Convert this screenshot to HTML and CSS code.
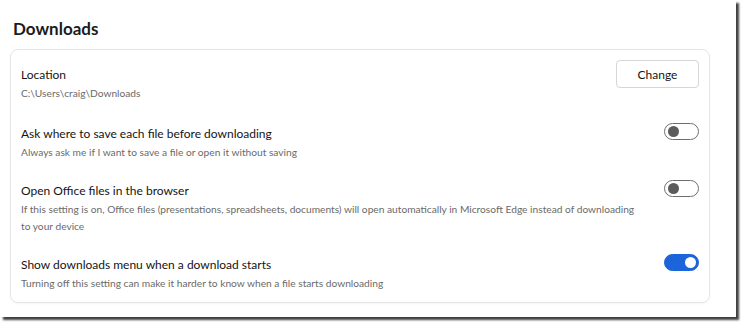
FILE: index.html
```html
<!DOCTYPE html>
<html lang="en">
<head>
    <meta charset="UTF-8">
    <title>Downloads</title>
    <link rel="stylesheet" href="styles.css">
</head>
<body>
    <div class="frame">
        <h2 class="section-title">Downloads</h2>

        <div class="settings-card">
            <div class="setting-row location-row">
                <div class="setting-text">
                    <div class="setting-label">Location</div>
                    <div class="setting-desc">C:\Users\craig\Downloads</div>
                </div>
                <button class="change-btn">Change</button>
            </div>

            <div class="setting-row">
                <div class="setting-text">
                    <div class="setting-label">Ask where to save each file before downloading</div>
                    <div class="setting-desc">Always ask me if I want to save a file or open it without saving</div>
                </div>
                <div class="toggle"><span class="knob"></span></div>
            </div>

            <div class="setting-row">
                <div class="setting-text">
                    <div class="setting-label">Open Office files in the browser</div>
                    <div class="setting-desc">If this setting is on, Office files (presentations, spreadsheets, documents) will open automatically in Microsoft Edge instead of downloading to your device</div>
                </div>
                <div class="toggle"><span class="knob"></span></div>
            </div>

            <div class="setting-row">
                <div class="setting-text">
                    <div class="setting-label">Show downloads menu when a download starts</div>
                    <div class="setting-desc">Turning off this setting can make it harder to know when a file starts downloading</div>
                </div>
                <div class="toggle on"><span class="knob"></span></div>
            </div>
        </div>
    </div>
</body>
</html>
```

FILE: styles.css
```css
* {
    margin: 0;
    padding: 0;
    box-sizing: border-box;
    font-family: Lato, 'Noto Sans', sans-serif;
}

body {
    background-color: #ffffff;
    width: 741px;
    height: 323px;
    overflow: hidden;
}

/* the screenshot sits in a frame with a dark drop shadow */
.frame {
    width: 736px;
    height: 317px;
    background: white;
    padding: 0 0 0 10px;
    box-shadow: 3px 3px 2px rgba(0, 0, 0, 0.75);
}

.section-title {
    font-size: 17px;
    font-weight: 700;
    color: #1c1c1c;
    padding: 18px 0 0 3px;
    height: 49px;
    line-height: 22px;
}

.settings-card {
    width: 700px;
    border: 1px solid #e5e5e5;
    border-radius: 8px;
    box-shadow: 0 1px 2px rgba(0, 0, 0, 0.04);
    padding-top: 5px;
}

.setting-row {
    display: flex;
    justify-content: space-between;
    align-items: flex-start;
    padding: 10px 10px 10px 10px;
}

.setting-text {
    max-width: 620px;
}

.setting-label {
    font-size: 12px;
    line-height: 20px;
    color: #141414;
}

.setting-desc {
    font-size: 10.2px;
    line-height: 17px;
    color: #6a6a6a;
}

.location-row {
    padding-bottom: 12px;
}

.change-btn {
    width: 83px;
    height: 28px;
    margin-top: -5px;
    background: white;
    border: 1px solid #d6d6d6;
    border-radius: 4px;
    font-size: 12px;
    color: #141414;
}

.toggle {
    width: 35px;
    height: 17px;
    margin-top: -1px;
    border: 1px solid #6e6e6e;
    border-radius: 9px;
    display: flex;
    align-items: center;
    padding: 0 3px;
    flex-shrink: 0;
}

.toggle .knob {
    width: 11px;
    height: 11px;
    border-radius: 50%;
    background-color: #5c5c5c;
}

.toggle.on {
    background-color: #1b64da;
    border-color: #1b64da;
    justify-content: flex-end;
    padding: 0 2px;
}

.toggle.on .knob {
    background-color: white;
}
```
